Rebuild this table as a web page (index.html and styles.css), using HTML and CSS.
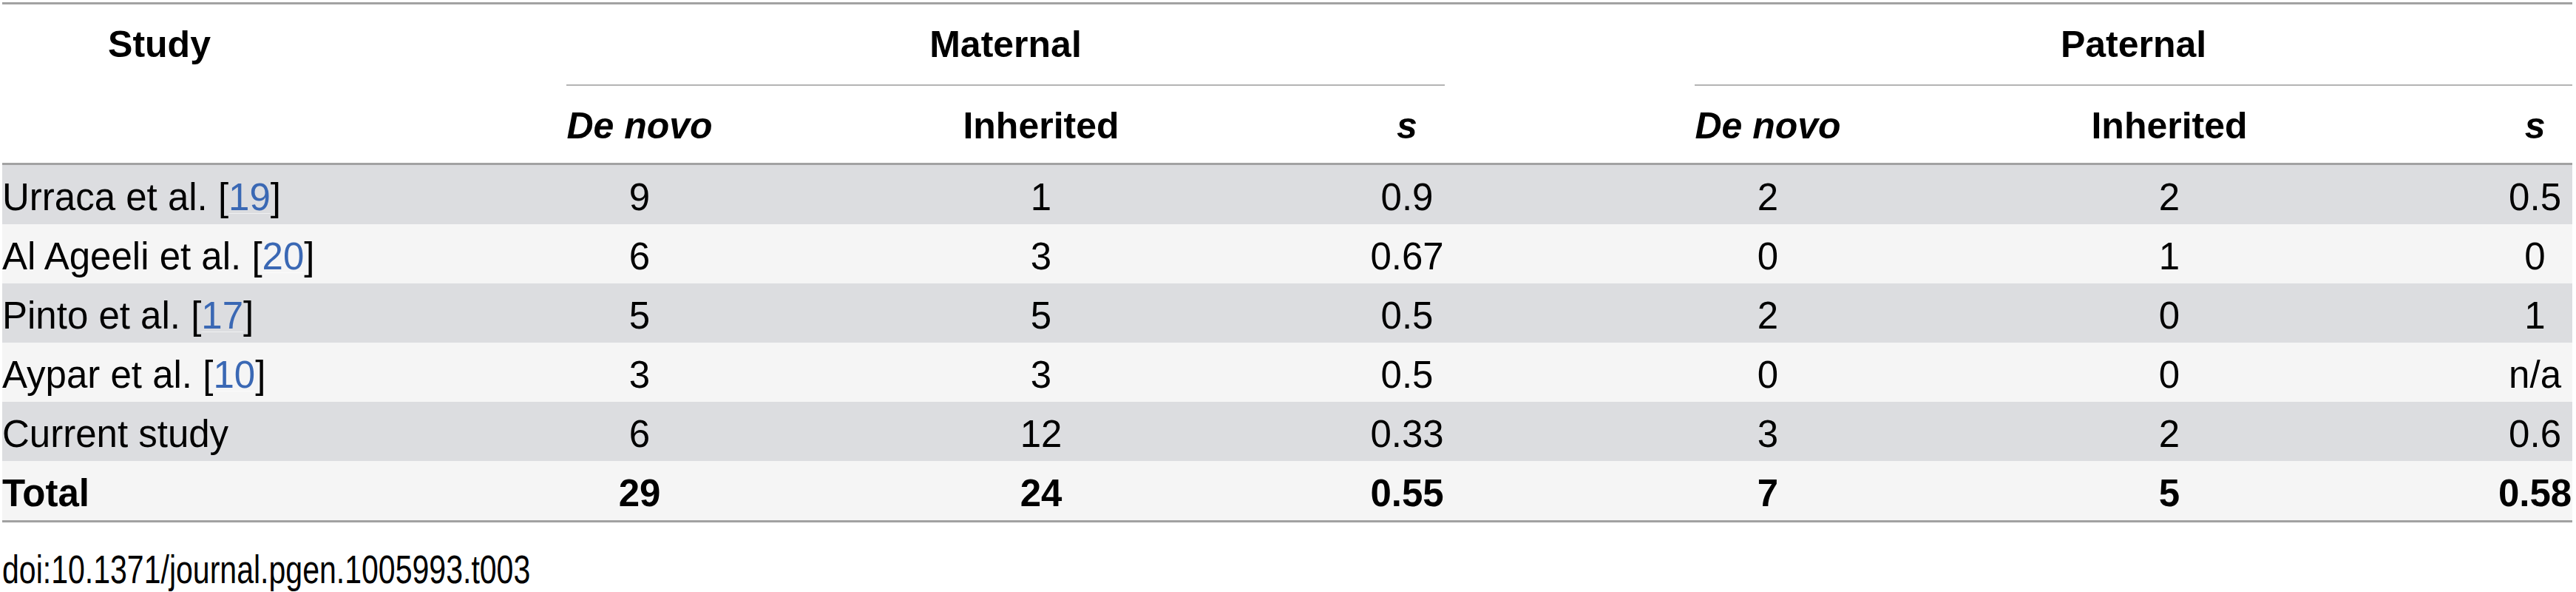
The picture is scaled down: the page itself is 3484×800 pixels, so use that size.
FILE: index.html
```html
<!DOCTYPE html>
<html lang="en">
<head>
<meta charset="utf-8">
<title>Table 3</title>
<link rel="stylesheet" href="styles.css">
</head>
<body>
<div class="figure">
  <table class="data">
    <colgroup>
      <col class="c-study"><col class="c-gap"><col class="c-dn"><col class="c-inh"><col class="c-s">
      <col class="c-gap"><col class="c-dn"><col class="c-inh"><col class="c-s2">
    </colgroup>
    <thead>
      <tr class="h1">
        <th class="study">Study</th><th></th><th colspan="3" class="group">Maternal</th><th></th><th colspan="3" class="group">Paternal</th>
      </tr>
      <tr class="h2">
        <th></th><th></th><th><i>De novo</i></th><th>Inherited</th><th><i>s</i></th><th></th><th><i>De novo</i></th><th>Inherited</th><th><i>s</i></th>
      </tr>
    </thead>
    <tbody>
      <tr class="dark"><td class="name">Urraca et al. [<a href="#r19">19</a>]</td><td></td><td>9</td><td>1</td><td>0.9</td><td></td><td>2</td><td>2</td><td>0.5</td></tr>
      <tr class="light"><td class="name">Al Ageeli et al. [<a href="#r20">20</a>]</td><td></td><td>6</td><td>3</td><td>0.67</td><td></td><td>0</td><td>1</td><td>0</td></tr>
      <tr class="dark"><td class="name">Pinto et al. [<a href="#r17">17</a>]</td><td></td><td>5</td><td>5</td><td>0.5</td><td></td><td>2</td><td>0</td><td>1</td></tr>
      <tr class="light"><td class="name">Aypar et al. [<a href="#r10">10</a>]</td><td></td><td>3</td><td>3</td><td>0.5</td><td></td><td>0</td><td>0</td><td>n/a</td></tr>
      <tr class="dark"><td class="name">Current study</td><td></td><td>6</td><td>12</td><td>0.33</td><td></td><td>3</td><td>2</td><td>0.6</td></tr>
      <tr class="light total"><td class="name">Total</td><td></td><td>29</td><td>24</td><td>0.55</td><td></td><td>7</td><td>5</td><td>0.58</td></tr>
    </tbody>
  </table>
  <div class="doi">doi:10.1371/journal.pgen.1005993.t003</div>
</div>
</body>
</html>
```

FILE: styles.css
```css
html, body {
  margin: 0;
  padding: 0;
  background: #ffffff;
}

body {
  font-family: "Liberation Sans", Arial, sans-serif;
  color: #000000;
  overflow: hidden;
}

.figure {
  padding: 3px 0 0 3px;
}

.data {
  border-collapse: separate;
  border-spacing: 0;
  table-layout: fixed;
  width: 3476px;
  border-top: 3px solid #a2a2a2;
  border-bottom: 3px solid #a2a2a2;
}

.c-study { width: 425px; }
.c-gap { width: 338px; }
.c-dn { width: 198px; }
.c-inh { width: 888px; }
.c-s { width: 102px; }
.c-s2 { width: 101px; }

th {
  font-size: 50px;
  font-weight: bold;
  padding: 0;
  text-align: center;
  vertical-align: middle;
}

th i {
  font-style: italic;
}

.h1 {
  height: 110px;
}

.h1 th {
  border-bottom: 2px solid transparent;
}

.h1 th.group {
  border-bottom: 2px solid #b4b4b4;
}

.h2 {
  height: 107px;
}

.h2 th {
  padding-top: 3px;
  border-bottom: 3px solid #a2a2a2;
}

tbody tr {
  height: 80px;
}

td {
  font-size: 51px;
  padding: 6px 0 0 0;
  text-align: center;
  vertical-align: middle;
  white-space: nowrap;
}

td.name {
  text-align: left;
}

tr.dark td {
  background: #dcdde0;
}

tr.light td {
  background: #f5f5f5;
}

tr.total td {
  font-weight: bold;
}

td a {
  color: #3a68b4;
  text-decoration: underline;
  text-decoration-color: rgba(255, 255, 255, 0.55);
  text-decoration-thickness: 1px;
  text-underline-offset: 4px;
}

.doi {
  display: inline-block;
  margin-top: 32px;
  font-size: 54px;
  transform: scaleX(0.76);
  transform-origin: left center;
  white-space: nowrap;
}
```
